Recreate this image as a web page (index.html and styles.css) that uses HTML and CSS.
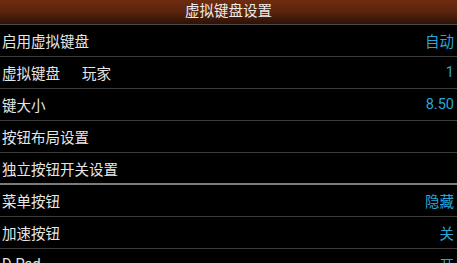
FILE: index.html
```html
<!DOCTYPE html>
<html>
<head>
<meta charset="utf-8">
<link rel="stylesheet" href="styles.css">
</head>
<body>
<div class="screen">
  <div class="header">虚拟键盘设置</div>
  <div class="list">
    <div class="row"><span class="label">启用虚拟键盘</span><span class="value">自动</span></div>
    <div class="row"><span class="label">虚拟键盘<span class="sub">玩家</span></span><span class="value">1</span></div>
    <div class="row"><span class="label">键大小</span><span class="value">8.50</span></div>
    <div class="row"><span class="label">按钮布局设置</span></div>
    <div class="row section-end"><span class="label">独立按钮开关设置</span></div>
    <div class="row"><span class="label">菜单按钮</span><span class="value">隐藏</span></div>
    <div class="row"><span class="label">加速按钮</span><span class="value">关</span></div>
    <div class="row"><span class="label">D-Pad</span><span class="value">开</span></div>
  </div>
</div>
</body>
</html>
```
FILE: styles.css
```css
html, body {
  margin: 0;
  padding: 0;
  background: #000;
}
.screen {
  width: 457px;
  height: 263px;
  overflow: hidden;
  background: #000;
  font-family: Roboto, "Noto Sans CJK SC", sans-serif;
  font-size: 14.5px;
}
.header {
  height: 24px;
  line-height: 24px;
  text-align: center;
  color: #ececec;
  background: linear-gradient(#6e2c10, #5a240d 50%, #2c1207);
  border-bottom: 1px solid #4a4a4a;
}
.list {
  display: flex;
  flex-direction: column;
}
.row {
  height: 31px;
  display: flex;
  align-items: center;
  justify-content: space-between;
  padding: 0 3px 0 2px;
  border-bottom: 1px solid #3c3c3c;
  color: #e6e6e6;
}
.row.section-end {
  height: 30px;
  border-bottom: 2px solid #7a7a7a;
}
.sub {
  margin-left: 22px;
}
.value {
  color: #2aa6d6;
}
```
